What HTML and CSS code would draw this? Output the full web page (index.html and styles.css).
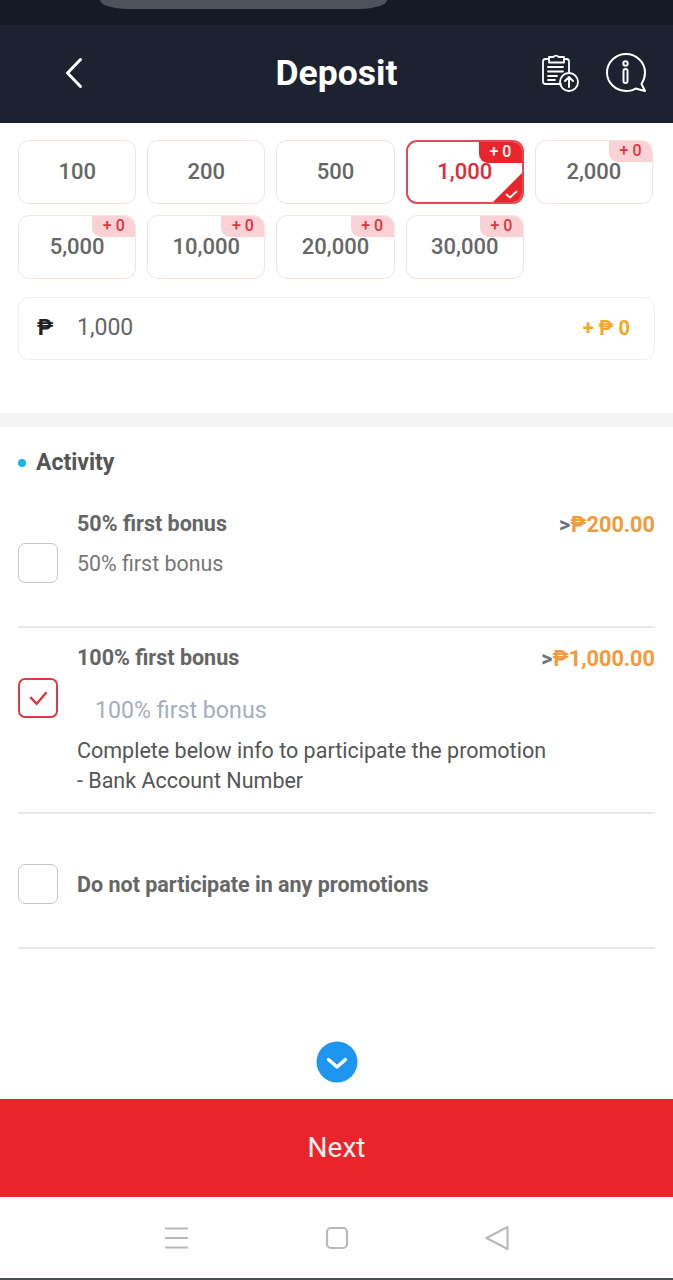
FILE: index.html
```html
<!DOCTYPE html>
<html lang="en">
<head>
<meta charset="utf-8">
<title>Deposit</title>
<link rel="stylesheet" href="styles.css">
</head>
<body>
<div class="app">
  <div class="status"><div class="notch"></div></div>
  <header class="topbar">
    <div class="side">
      <svg class="back" viewBox="0 0 20 32" width="20" height="32"><path d="M16.500 2.500 3.500 16 16.500 29.500" fill="none" stroke="#fff" stroke-width="3" stroke-linecap="round" stroke-linejoin="round"/></svg>
    </div>
    <h1 class="title">Deposit</h1>
    <div class="tools">
      <svg viewBox="0 0 42 42" width="42" height="42" fill="none" stroke="#fff" stroke-width="1.800" stroke-linecap="round" stroke-linejoin="round">
        <path d="M22 32H6.500A2.500 2.500 0 0 1 4 29.500V9.500A2.500 2.500 0 0 1 6.500 7H10M25 7h2.500A2.500 2.500 0 0 1 30 9.500V20"/>
        <path d="M10 5h4.500a3 3 0 0 1 5 0H25v5.500H10z"/>
        <path d="M9 15h15M9 19.500h15M9 24h9M9 28h7"/>
        <circle cx="30" cy="30" r="9"/>
        <path d="M30 35v-9.500M26 29l4-4 4 4" stroke-width="2"/>
      </svg>
      <svg viewBox="0 0 42 42" width="42" height="42" fill="none" stroke="#fff" stroke-width="2" stroke-linecap="round" stroke-linejoin="round">
        <path d="M21 2C10.500 2 2 10.300 2 20.500S10.500 39 21 39c4.200 0 7.500-1 9.500-2.500L40 39l-3.500-7C38.800 28.500 40 24.800 40 20.500 40 10.300 31.500 2 21 2z"/>
        <circle cx="20.500" cy="11.500" r="2.200"/>
        <rect x="18.500" y="17" width="4" height="14" rx="2"/>
      </svg>
    </div>
  </header>

  <section class="amounts">
    <div class="grid">
      <div class="cell">100</div>
      <div class="cell">200</div>
      <div class="cell">500</div>
      <div class="cell cell-on">1,000<span class="tag tag-on">+ 0</span>
        <svg class="corner" viewBox="0 0 29 29" width="29" height="29"><path d="M29 0V23a6 6 0 0 1-6 6H0z" fill="#e8252b"/><path d="M13 21l4 3.500 7-6.500" fill="none" stroke="#fff" stroke-width="1.800"/></svg>
      </div>
      <div class="cell">2,000<span class="tag">+ 0</span></div>
      <div class="cell">5,000<span class="tag">+ 0</span></div>
      <div class="cell">10,000<span class="tag">+ 0</span></div>
      <div class="cell">20,000<span class="tag">+ 0</span></div>
      <div class="cell">30,000<span class="tag">+ 0</span></div>
    </div>
    <div class="field">
      <span class="peso">₱</span>
      <span class="value">1,000</span>
      <span class="bonus">+ ₱ 0</span>
    </div>
  </section>

  <div class="band"></div>

  <section class="activity">
    <h2 class="heading"><span class="dot"></span>Activity</h2>

    <div class="promo promo-a">
      <div class="box"></div>
      <div class="promo-body">
        <div class="promo-head"><span class="promo-name">50% first bonus</span><span class="limit"><i>&gt;</i>₱200.00</span></div>
        <div class="promo-sub">50% first bonus</div>
      </div>
    </div>

    <div class="promo promo-b">
      <div class="box box-on"><svg viewBox="0 0 40 40" width="36" height="36"><path d="M11.500 19l7 7.500 11-13" fill="none" stroke="#e0323c" stroke-width="2.600"/></svg></div>
      <div class="promo-body">
        <div class="promo-head"><span class="promo-name">100% first bonus</span><span class="limit"><i>&gt;</i>₱1,000.00</span></div>
        <div class="promo-sub promo-sub-muted">100% first bonus</div>
        <p class="note">Complete below info to participate the promotion<br>- Bank Account Number</p>
      </div>
    </div>

    <div class="promo promo-c">
      <div class="box"></div>
      <span class="promo-name">Do not participate in any promotions</span>
    </div>
  </section>

  <div class="more">
    <svg viewBox="0 0 42 42" width="42" height="42"><circle cx="21" cy="21" r="20.500" fill="#1e96f0"/><path d="M12.500 18.500 21 26l8.500-7.500" fill="none" stroke="#fff" stroke-width="3.400" stroke-linecap="round" stroke-linejoin="round"/></svg>
  </div>

  <button class="next" type="button">Next</button>

  <nav class="navbar">
    <svg viewBox="0 0 26 24" width="26" height="24" fill="none" stroke="#b9b9b9" stroke-width="2"><path d="M1 2.500h23M1 12h23M1 21.500h23"/></svg>
    <svg viewBox="0 0 24 24" width="24" height="24" fill="none" stroke="#b9b9b9" stroke-width="2.200"><rect x="2" y="2" width="20" height="20" rx="4"/></svg>
    <svg viewBox="0 0 26 26" width="26" height="26" fill="none" stroke="#b9b9b9" stroke-width="2.200" stroke-linejoin="round"><path d="M23.500 2 2.500 13l21 11z"/></svg>
  </nav>
  <div class="edge"></div>
</div>
</body>
</html>
```
FILE: styles.css
```css
* { box-sizing: border-box; }
html, body { margin: 0; padding: 0; background: #fff; }
body { font-family: Roboto, "Liberation Sans", sans-serif; color: #666; }
.app { width: 673px; height: 1280px; display: flex; flex-direction: column; overflow: hidden; }

.status { height: 25px; background: #151a26; padding-left: 100px; }
.notch { width: 287px; height: 9px; background: #4d525c; border-radius: 0 0 28px 28px / 0 0 9px 9px; }

.topbar { height: 98px; background: #1c2230; display: grid; grid-template-columns: 1fr auto 1fr; align-items: center; padding: 0 26px; }
.side { display: flex; padding-left: 38px; }
.back { margin-top: -2px; }
.title { margin: -2px 0 0; text-align: center; color: #fff; font-size: 35.500px; font-weight: 700; line-height: 40px; }
.tools { display: flex; gap: 24px; align-items: center; justify-content: flex-end; margin-top: -2px; }

.amounts { padding: 17px 18px 0; height: 290px; }
.grid { display: grid; grid-template-columns: repeat(5, 118.300px); column-gap: 10.900px; row-gap: 11px; }
.cell { position: relative; height: 64px; border: 1px solid #f6e3de; border-radius: 11px; display: flex; align-items: center; justify-content: center; font-size: 22px; font-weight: 500; color: #666; overflow: hidden; background: #fff; padding-bottom: 2px; }
.cell-on { border: 2px solid #e04a51; color: #e02b35; }
.tag { position: absolute; top: 0; right: 0; width: 43px; height: 21px; background: #fad2d5; color: #e0333d; border-radius: 0 0 0 9px; font-size: 16px; font-weight: 500; line-height: 20px; text-align: center; }
.tag-on { background: #e8252b; color: #fff; }
.corner { position: absolute; right: 0; bottom: 0; }

.field { margin-top: 18px; width: 637px; height: 63px; border: 1px solid #f1eeeb; border-radius: 11px; display: flex; align-items: center; padding: 0 24px 2px 18px; font-size: 23px; }
.peso { width: 40px; font-size: 22px; font-weight: 700; color: #222; }
.value { flex: 1; color: #666; }
.bonus { color: #f5a623; font-size: 20px; font-weight: 700; }

.band { height: 14px; background: #f4f4f4; }

.activity { padding: 0 18px; flex: 1; }
.heading { margin: 22px 0 0; height: 28px; display: flex; align-items: center; gap: 10px; font-size: 23px; line-height: 28px; font-weight: 700; color: #555; }
.dot { width: 8px; height: 8px; border-radius: 50%; background: #18b7e8; }

.promo { display: flex; gap: 19px; border-bottom: 2px solid #e8e8e8; width: 637px; }
.promo-a { height: 151px; padding-top: 34px; align-items: flex-start; }
.promo-b { height: 186px; padding-top: 17px; }
.promo-c { height: 135px; padding-top: 8px; align-items: center; }
.box { flex: none; width: 40px; height: 40px; border: 1.500px solid #c6c6c6; border-radius: 7px; }
.promo-a .box { margin-top: 32px; }
.promo-b .box { margin-top: 33px; }
.promo-c .box { margin-top: -1px; }
.box-on { border: 2px solid #de3a42; }
.box-on svg { display: block; }

.promo-body { flex: 1; min-width: 0; }
.promo-head { display: flex; justify-content: space-between; align-items: center; height: 26px; }
.promo-name { font-size: 21.500px; font-weight: 700; color: #666; line-height: 26px; }
.limit { font-size: 21.700px; font-weight: 700; color: #f39a3c; }
.limit i { font-style: normal; color: #6c7280; }
.promo-sub { margin-top: 14px; font-size: 21.400px; line-height: 26px; color: #777; }
.promo-sub-muted { margin-top: 26px; padding-left: 18px; font-size: 23.200px; color: #a7adbb; }
.note { margin: 13px 0 0; font-size: 21.500px; line-height: 30px; color: #555; }

.more { height: 79px; padding-top: 21px; display: flex; justify-content: center; }
.next { display: block; width: 100%; height: 98px; border: 0; background: #e8252b; color: #fdf2f2; font-family: inherit; font-size: 28px; font-weight: 400; padding: 0 0 2px; }
.navbar { height: 81px; display: flex; align-items: center; justify-content: center; gap: 135px; background: #fff; }
.edge { height: 2px; background: #4a4f59; }
```
